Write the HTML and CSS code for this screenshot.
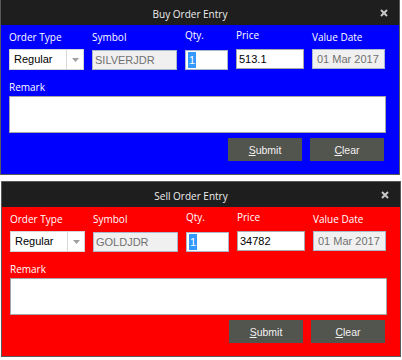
FILE: index.html
```html
<!DOCTYPE html>
<html lang="en">
<head>
    <meta charset="UTF-8">
    <meta name="viewport" content="width=device-width, initial-scale=1.0">
    <title>Order Entry</title>
    <link rel="stylesheet" href="styles.css">
</head>
<body>
    <!-- Buy window -->
    <div class="window window-buy">
        <div class="titlebar">
            <span class="title">Buy Order Entry</span>
            <span class="close">
                <svg width="8" height="8" viewBox="0 0 8 8"><path d="M1 1L7 7M7 1L1 7" stroke="#c8c8c8" stroke-width="2"/></svg>
            </span>
        </div>
        <div class="form">
            <div class="fields">
                <span class="label">Order Type</span>
                <span class="label">Symbol</span>
                <span class="label raised">Qty.</span>
                <span class="label raised">Price</span>
                <span class="label">Value Date</span>

                <div class="field combo">
                    <span class="combo-text">Regular</span>
                    <span class="combo-btn"><svg width="7" height="4" viewBox="0 0 7 4"><path d="M0 0H7L3.5 4Z" fill="#a0a0a0"/></svg></span>
                </div>
                <div class="field readonly">SILVERJDR</div>
                <div class="field qty"><span class="selected">1</span></div>
                <div class="field price">513.1</div>
                <div class="field readonly date">01 Mar 2017</div>
            </div>

            <span class="label remark-label">Remark</span>
            <div class="remark"></div>

            <div class="actions">
                <button class="btn"><u>S</u>ubmit</button>
                <button class="btn"><u>C</u>lear</button>
            </div>
        </div>
    </div>

    <!-- Sell window -->
    <div class="window window-sell">
        <div class="titlebar">
            <span class="title">Sell Order Entry</span>
            <span class="close">
                <svg width="8" height="8" viewBox="0 0 8 8"><path d="M1 1L7 7M7 1L1 7" stroke="#c8c8c8" stroke-width="2"/></svg>
            </span>
        </div>
        <div class="form">
            <div class="fields">
                <span class="label">Order Type</span>
                <span class="label">Symbol</span>
                <span class="label raised">Qty.</span>
                <span class="label raised">Price</span>
                <span class="label">Value Date</span>

                <div class="field combo">
                    <span class="combo-text">Regular</span>
                    <span class="combo-btn"><svg width="7" height="4" viewBox="0 0 7 4"><path d="M0 0H7L3.5 4Z" fill="#a0a0a0"/></svg></span>
                </div>
                <div class="field readonly">GOLDJDR</div>
                <div class="field qty"><span class="selected">1</span></div>
                <div class="field price">34782</div>
                <div class="field readonly date">01 Mar 2017</div>
            </div>

            <span class="label remark-label">Remark</span>
            <div class="remark"></div>

            <div class="actions">
                <button class="btn"><u>S</u>ubmit</button>
                <button class="btn"><u>C</u>lear</button>
            </div>
        </div>
    </div>
</body>
</html>
```

FILE: styles.css
```css
body {
    margin: 0;
    padding: 0;
    background-color: #ffffff;
    font-family: 'Open Sans', 'Liberation Sans', sans-serif;
    overflow: hidden;
}

.window {
    width: 398px;
    border: 1px solid #595959;
}

.window-buy {
    margin-top: -1px;
}

.window-sell {
    margin-top: 6px;
    margin-left: 1px;
}

.titlebar {
    height: 25px;
    background-color: #1e1e1e;
    display: flex;
    align-items: center;
    position: relative;
}

.title {
    flex: 1;
    text-align: center;
    color: #eeeeee;
    font-size: 10px;
    padding-right: 20px;
    padding-top: 3px;
}

.close {
    position: absolute;
    right: 11px;
    top: 9px;
    line-height: 0;
}

.form {
    height: 149px;
    box-sizing: border-box;
    padding: 5px 14px 0 8px;
}

.window-buy .form {
    background-color: #0000ff;
}

.window-sell .form {
    background-color: #ff0000;
}

.fields {
    display: grid;
    grid-template-columns: 75px 85px 43px 68px 73px;
    grid-template-rows: 14px 21px;
    column-gap: 8px;
    row-gap: 5px;
}

.label {
    display: block;
    color: #ffffff;
    font-size: 10px;
    line-height: 14px;
}

.label.raised {
    margin-top: -2px;
}

.field {
    box-sizing: border-box;
    height: 20px;
    border: 1px solid #abb8cc;
    background-color: #ffffff;
    font-family: 'Liberation Sans', Arial, sans-serif;
    font-size: 11px;
    line-height: 18px;
    padding-left: 2px;
    color: #000000;
    white-space: nowrap;
    overflow: hidden;
}

.combo {
    height: 21px;
    display: flex;
    padding: 0;
    border-color: #d4d4d4;
}

.combo-text {
    flex: 1;
    padding-left: 4px;
    line-height: 19px;
}

.combo-btn {
    width: 16px;
    border-left: 1px solid #d8d8d8;
    display: flex;
    align-items: center;
    justify-content: center;
}

.readonly {
    background-color: #f0f0f0;
    color: #707070;
    margin-top: 1px;
}

.date {
    margin-top: 0;
    padding-left: 4px;
}

.qty {
    margin-top: 1px;
    padding-top: 1px;
    line-height: 16px;
}

.selected {
    display: inline-block;
    background-color: #3399ff;
    color: #ffffff;
    padding: 0 1px;
}

.price {
    border-color: #a8a8a8;
}

.remark-label {
    margin-top: 10px;
}

.remark {
    width: 377px;
    height: 37px;
    box-sizing: border-box;
    margin-top: 2px;
    border: 1px solid #a6a6a6;
    background-color: #ffffff;
}

.actions {
    display: flex;
    justify-content: flex-end;
    gap: 8px;
    margin-top: 5px;
    padding-right: 1px;
}

.btn {
    width: 74px;
    height: 23px;
    border: none;
    background-color: #52544e;
    color: #f2f2f2;
    font-family: 'Liberation Sans', Arial, sans-serif;
    font-size: 10.5px;
    padding: 0;
    cursor: pointer;
}
```
